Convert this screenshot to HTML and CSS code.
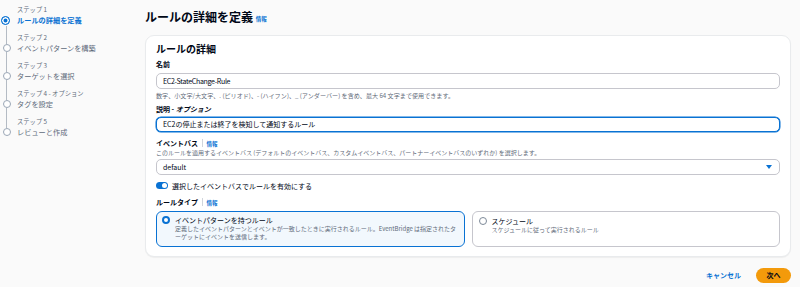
FILE: index.html
```html
<!DOCTYPE html>
<html lang="ja">
<head>
    <title>ルールの詳細を定義</title>
    <meta content="width=device-width, initial-scale=1" name="viewport" />
    <link rel="stylesheet" href="styles.css">
</head>
<body>
    <div class="layout">
        <nav class="sidebar">
            <div class="step active">
                <span class="step-num">ステップ 1</span>
                <span class="step-dot"></span>
                <span class="step-title">ルールの詳細を定義</span>
            </div>
            <div class="step">
                <span class="step-num">ステップ 2</span>
                <span class="step-dot"></span>
                <span class="step-title">イベントパターンを構築</span>
            </div>
            <div class="step">
                <span class="step-num">ステップ 3</span>
                <span class="step-dot"></span>
                <span class="step-title">ターゲットを選択</span>
            </div>
            <div class="step">
                <span class="step-num">ステップ 4 - オプション</span>
                <span class="step-dot"></span>
                <span class="step-title">タグを設定</span>
            </div>
            <div class="step last">
                <span class="step-num">ステップ 5</span>
                <span class="step-dot"></span>
                <span class="step-title">レビューと作成</span>
            </div>
        </nav>

        <main class="main">
            <h1 class="page-title">ルールの詳細を定義 <a class="info" href="#">情報</a></h1>

            <section class="card">
                <h2 class="card-title">ルールの詳細</h2>

                <div class="label">名前</div>
                <div class="input latin">EC2-StateChange-Rule</div>
                <div class="hint">数字、小文字/大文字、. (ピリオド)、- (ハイフン)、_ (アンダーバー) を含め、最大 64 文字まで使用できます。</div>

                <div class="label gap">説明 - <i>オプション</i></div>
                <div class="input focused">EC2の停止または終了を検知して通知するルール</div>

                <div class="label gap-lg">イベントバス <span class="sep"></span><a class="info" href="#">情報</a></div>
                <div class="hint tight">このルールを適用するイベントバス (デフォルトのイベントバス、カスタムイベントバス、パートナーイベントバスのいずれか) を選択します。</div>
                <div class="input select">
                    <span>default</span>
                    <span class="caret"></span>
                </div>

                <div class="toggle-row">
                    <span class="toggle"></span>
                    <span>選択したイベントバスでルールを有効にする</span>
                </div>

                <div class="label gap-lg">ルールタイプ <span class="sep"></span><a class="info" href="#">情報</a></div>
                <div class="tiles">
                    <div class="tile selected">
                        <span class="radio"></span>
                        <div>
                            <div class="tile-title">イベントパターンを持つルール</div>
                            <div class="tile-desc">定義したイベントパターンとイベントが一致したときに実行されるルール。EventBridge は指定されたターゲットにイベントを送信します。</div>
                        </div>
                    </div>
                    <div class="tile">
                        <span class="radio"></span>
                        <div>
                            <div class="tile-title">スケジュール</div>
                            <div class="tile-desc">スケジュールに従って実行されるルール</div>
                        </div>
                    </div>
                </div>
            </section>

            <div class="actions">
                <a class="btn-link" href="#">キャンセル</a>
                <button class="btn-primary">次へ</button>
            </div>
        </main>
    </div>
</body>
</html>
```

FILE: styles.css
```css
body {
    margin: 0;
    background: #fafafa;
    color: #000716;
    font-family: "Noto Sans CJK JP", "Noto Sans", sans-serif;
}
a {
    text-decoration: none;
}
.layout {
    display: flex;
}

/* steps */
.sidebar {
    width: 145px;
    flex-shrink: 0;
    padding-top: 5px;
}
.step {
    position: relative;
    display: grid;
    grid-template-columns: 17px auto;
    margin-bottom: 8px;
}
.step-num {
    grid-column: 2;
    font-size: 6.3px;
    line-height: 10px;
    color: #5f6b7a;
}
.step-dot {
    grid-column: 1;
    grid-row: 2;
    align-self: center;
    margin-left: 3px;
    width: 6px;
    height: 6px;
    border: 1.2px solid #9ba7b6;
    border-radius: 50%;
    background: #fff;
}
.step-title {
    grid-column: 2;
    grid-row: 2;
    font-size: 7.2px;
    line-height: 10px;
    color: #5f6b7a;
}
.step::after {
    content: "";
    position: absolute;
    left: 6px;
    top: 19px;
    height: 20px;
    width: 1px;
    background: #b4bbc4;
}
.step.last::after {
    display: none;
}
.step.active .step-dot {
    margin-left: 1px;
    width: 7px;
    height: 7px;
    border: 1.5px solid #0972d3;
    background: #0972d3;
    box-shadow: inset 0 0 0 1.5px #fff;
}
.step.active .step-title {
    color: #0972d3;
    font-weight: 700;
}
.step.active::after {
    top: 21px;
    height: 18px;
}

/* main */
.main {
    flex: 1;
    padding: 9px 9px 0 0;
}
.page-title {
    margin: 0 0 8px;
    font-size: 12px;
    line-height: 16px;
    font-weight: 700;
}
.info {
    font-size: 5.5px;
    font-weight: 700;
    color: #0972d3;
    vertical-align: middle;
}
.card {
    background: #fff;
    border: 1px solid #e9ebed;
    border-radius: 9px;
    padding: 6px 10px 9px 10px;
    box-shadow: 0 1px 1px rgba(0, 7, 22, 0.05);
}
.card-title {
    margin: 0 0 3px;
    font-size: 10px;
    line-height: 14px;
    font-weight: 700;
}
.label {
    font-size: 7px;
    line-height: 10px;
    font-weight: 700;
    margin-bottom: 4px;
}
.label i {
    font-style: italic;
}
.label.gap {
    margin-top: 4px;
    margin-bottom: 3px;
}
.label.gap-lg {
    margin-top: 6px;
    margin-bottom: 0;
}
.label .info {
    vertical-align: baseline;
}
.sep {
    display: inline-block;
    width: 1px;
    height: 8px;
    margin: 0 4px 0 2px;
    background: #d1d5db;
    vertical-align: -1px;
}
.input {
    box-sizing: border-box;
    height: 16px;
    padding: 0 6px;
    border: 1px solid #c6c6cd;
    border-radius: 5px;
    font-size: 7px;
    line-height: 14px;
    background: #fff;
}
.input.latin {
    letter-spacing: -0.3px;
}
.input.focused {
    border-color: #0972d3;
    box-shadow: 0 0 0 0.5px #0972d3;
    height: 15px;
    line-height: 13px;
}
.hint {
    margin-top: 2px;
    font-size: 6.1px;
    line-height: 9px;
    color: #5f6b7a;
}
.hint.tight {
    margin: 0 0 2px;
    line-height: 8px;
    font-size: 6px;
}
.select {
    display: flex;
    justify-content: space-between;
    align-items: center;
}
.caret {
    width: 0;
    height: 0;
    border-left: 3.5px solid transparent;
    border-right: 3.5px solid transparent;
    border-top: 4px solid #0972d3;
    margin-right: 1px;
}
.toggle-row {
    display: flex;
    align-items: center;
    gap: 4px;
    margin-top: 6px;
    font-size: 7px;
    line-height: 10px;
}
.toggle {
    position: relative;
    width: 12px;
    height: 7px;
    border-radius: 4px;
    background: #0972d3;
}
.toggle::after {
    content: "";
    position: absolute;
    right: 1px;
    top: 1px;
    width: 5px;
    height: 5px;
    border-radius: 50%;
    background: #fff;
}
.tiles {
    display: grid;
    grid-template-columns: 1fr 1fr;
    gap: 7px;
    margin-top: 3px;
}
.tile {
    box-sizing: border-box;
    height: 36px;
    display: flex;
    gap: 5px;
    padding: 4px 6px;
    border: 1px solid #c6c6cd;
    border-radius: 6px;
    background: #fff;
}
.tile.selected {
    border: 1.5px solid #0972d3;
    background: #f2f8fd;
    padding: 3.5px 5px;
}
.radio {
    flex-shrink: 0;
    box-sizing: border-box;
    width: 8px;
    height: 8px;
    margin-top: 1px;
    border: 1px solid #7d8998;
    border-radius: 50%;
    background: #fff;
}
.tile.selected .radio {
    border: 2.2px solid #0972d3;
}
.tile-title {
    font-size: 7px;
    line-height: 10px;
}
.tile-desc {
    font-size: 6px;
    line-height: 8px;
    color: #5f6b7a;
}
.actions {
    display: flex;
    justify-content: flex-end;
    align-items: center;
    gap: 15px;
    margin-top: 11px;
}
.btn-link {
    font-size: 7px;
    font-weight: 700;
    color: #0972d3;
}
.btn-primary {
    height: 15px;
    width: 35px;
    padding: 0;
    border: none;
    border-radius: 8px;
    background: #f39a0b;
    color: #000716;
    font-family: inherit;
    font-size: 7px;
    font-weight: 700;
}
```
